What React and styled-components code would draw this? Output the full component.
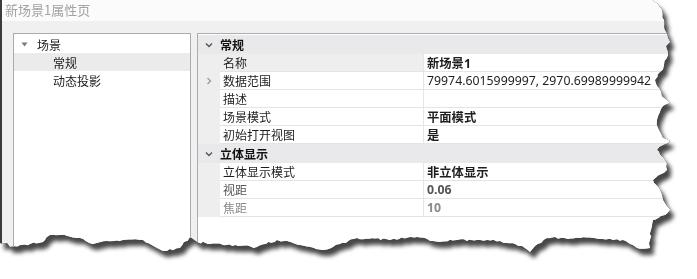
import React from "react";
import styled, { createGlobalStyle } from "styled-components";

const GlobalStyle = createGlobalStyle`
  html, body { margin: 0; padding: 0; background: #ffffff; }
  body { font-family: "Noto Sans", "Noto Sans CJK SC", sans-serif; }
`;

const Stage = styled.div`
  width: 697px;
  height: 279px;
  background: #ffffff;
  overflow: hidden;
`;

const ShadowWrap = styled.div`
  width: 680px;
  height: 260px;
  filter: drop-shadow(0 0 0.7px rgba(0, 0, 0, 0.95)) drop-shadow(4px 6px 2px rgba(0, 0, 0, 0.72));
`;

const Window = styled.div`
  width: 680px;
  height: 260px;
  box-sizing: border-box;
  background: #f0f0f0;
  border-left: 2px solid #3c3c3c;
  display: flex;
  flex-direction: column;
  clip-path: ${(p) => p.$clip};
`;

const TitleBar = styled.div`
  height: 21px;
  flex: none;
  background: #fbfbfb;
  color: #a3a3a3;
  font-family: "Noto Sans CJK SC", sans-serif;
  font-size: 13px;
  line-height: 19px;
  padding-left: 3px;
`;

const Body = styled.div`
  flex: 1;
  display: flex;
  gap: 6px;
  padding: 12px 0 0 11px;
  min-height: 0;
`;

const TreePanel = styled.div`
  width: 176px;
  flex: none;
  background: #ffffff;
  border: 1px solid #acacac;
  padding-top: 1px;
  font-family: "Noto Sans CJK SC", sans-serif;
  font-size: 12px;
  color: #222;
`;

const TreeRow = styled.div`
  height: 18px;
  display: flex;
  align-items: center;
  padding-left: ${(p) => p.$indent}px;
  background: ${(p) => (p.$selected ? "#ebebeb" : "transparent")};
`;

const TreeArrow = styled.svg`
  width: 7px;
  height: 5px;
  margin-right: 9px;
`;

const GridPanel = styled.div`
  flex: 1;
  background: #ffffff;
  border: 1px solid #acacac;
  padding-top: 1px;
  font-family: "Noto Sans", "Noto Sans CJK SC", sans-serif;
  font-size: 12px;
  color: #1e1e1e;
`;

const Category = styled.div`
  height: 19px;
  display: grid;
  grid-template-columns: 22px 1fr;
  align-items: center;
  background: #e9e9eb;
  font-family: "Noto Sans CJK SC", sans-serif;
  font-weight: 700;
  font-size: 12px;
  color: #111;
`;

const Row = styled.div`
  height: 18px;
  display: grid;
  grid-template-columns: 22px 204px 1fr;
`;

const Gutter = styled.div`
  align-self: stretch;
  background: ${(p) => (p.$plain ? "transparent" : "#eeeeef")};
  display: flex;
  align-items: center;
  justify-content: center;
`;

const NameCell = styled.div`
  display: flex;
  align-items: center;
  padding-left: 3px;
  border-bottom: 1px solid #e4e4e4;
  border-right: 1px solid #e4e4e4;
  background: ${(p) => (p.$selected ? "#eeeeef" : "#ffffff")};
  color: ${(p) => p.$color || "#1e1e1e"};
  font-family: "Noto Sans CJK SC", sans-serif;
  white-space: nowrap;
`;

const ValueCell = styled.div`
  display: flex;
  align-items: center;
  padding-left: 3px;
  border-bottom: 1px solid #e4e4e4;
  font-weight: ${(p) => (p.$bold ? 700 : 400)};
  color: ${(p) => p.$color || "#1e1e1e"};
  white-space: nowrap;
  overflow: hidden;
  font-family: "Noto Sans", "Noto Sans CJK SC", sans-serif;
  font-size: 12.3px;
`;

const IconBox = styled.svg`
  width: 8px;
  height: 8px;
`;

const ChevronDown = () => (
  <IconBox viewBox="0 0 8 8">
    <path d="M1 2.5 L4 5.5 L7 2.5" fill="none" stroke="#555" strokeWidth="1.4" />
  </IconBox>
);

const ChevronRight = () => (
  <IconBox viewBox="0 0 8 8">
    <path d="M2.5 1 L5.5 4 L2.5 7" fill="none" stroke="#9a9a9a" strokeWidth="1.3" />
  </IconBox>
);

function makeClip() {
  const right = [
    [652, 0], [658, 4], [662, 10], [664, 20], [665, 30], [668, 38], [670, 42], [666, 46],
    [668, 55], [664, 65], [660, 72], [655, 80], [657, 86], [661, 92], [664, 98], [670, 103],
    [663, 106], [660, 112], [657, 120], [659, 130], [663, 138], [670, 141], [663, 145],
    [657, 150], [665, 160], [667, 170], [653, 180], [660, 190], [663, 200], [670, 210],
    [665, 215], [653, 220], [651, 230], [650, 240], [650, 248],
  ];
  const bottom = [
    [637, 248], [630, 244], [623, 240], [613, 240], [600, 239], [580, 238], [547, 238],
    [535, 246], [530, 252], [522, 246], [515, 244], [500, 241], [480, 240], [457, 240],
    [440, 242], [417, 237], [390, 240], [357, 238], [340, 244], [333, 247], [323, 250],
    [300, 245], [285, 241], [277, 240], [257, 247], [223, 245], [197, 242], [190, 237],
    [180, 248], [163, 251], [157, 248], [143, 240], [123, 240], [107, 241], [93, 244],
    [80, 238], [67, 236], [50, 235], [43, 242], [30, 244], [10, 247], [7, 243], [0, 243],
  ];
  const pts = [[0, 0], ...right, ...bottom];
  let seed = 7;
  const rnd = () => {
    seed = (seed * 9301 + 49297) % 233280;
    return seed / 233280 - 0.5;
  };
  const out = [];
  for (let i = 0; i < pts.length; i++) {
    const [x1, y1] = pts[i];
    out.push([x1, y1]);
    if (i + 1 < pts.length && i > 0) {
      const [x2, y2] = pts[i + 1];
      const d = Math.hypot(x2 - x1, y2 - y1);
      const n = Math.floor(d / 3);
      for (let k = 1; k < n; k++) {
        const t = k / n;
        out.push([x1 + (x2 - x1) * t + rnd() * 2.2, y1 + (y2 - y1) * t + rnd() * 2.2]);
      }
    }
  }
  return "polygon(" + out.map(([x, y]) => `${x.toFixed(1)}px ${y.toFixed(1)}px`).join(", ") + ")";
}

const clip = makeClip();

const general = [
  { name: "名称", value: "新场景1", bold: true, selected: true },
  { name: "数据范围", value: "79974.6015999997, 2970.69989999942", expand: true },
  { name: "描述", value: "" },
  { name: "场景模式", value: "平面模式", bold: true },
  { name: "初始打开视图", value: "是", bold: true },
];

const stereo = [
  { name: "立体显示模式", value: "非立体显示", bold: true },
  { name: "视距", value: "0.06", bold: true, nameColor: "#555", valueColor: "#555" },
  { name: "焦距", value: "10", bold: true, nameColor: "#8a8a8a", valueColor: "#8a8a8a" },
];

const PropRow = ({ r }) => (
  <Row>
    <Gutter>{r.expand ? <ChevronRight /> : null}</Gutter>
    <NameCell $selected={r.selected} $color={r.nameColor}>{r.name}</NameCell>
    <ValueCell $bold={r.bold} $color={r.valueColor}>{r.value}</ValueCell>
  </Row>
);

const CategoryRow = ({ title }) => (
  <Category>
    <Gutter $plain>
      <ChevronDown />
    </Gutter>
    <span>{title}</span>
  </Category>
);

export default function App() {
  return (
    <Stage>
      <GlobalStyle />
      <ShadowWrap>
        <Window $clip={clip}>
          <TitleBar>新场景1属性页</TitleBar>
          <Body>
            <TreePanel>
              <TreeRow $indent={7}>
                <TreeArrow viewBox="0 0 7 5">
                  <path d="M0.5 0.5 L6.5 0.5 L3.5 4.5 Z" fill="#7a7a7a" />
                </TreeArrow>
                场景
              </TreeRow>
              <TreeRow $indent={39} $selected>常规</TreeRow>
              <TreeRow $indent={39}>动态投影</TreeRow>
            </TreePanel>
            <GridPanel>
              <CategoryRow title="常规" />
              {general.map((r) => (
                <PropRow key={r.name} r={r} />
              ))}
              <CategoryRow title="立体显示" />
              {stereo.map((r) => (
                <PropRow key={r.name} r={r} />
              ))}
            </GridPanel>
          </Body>
        </Window>
      </ShadowWrap>
    </Stage>
  );
}
